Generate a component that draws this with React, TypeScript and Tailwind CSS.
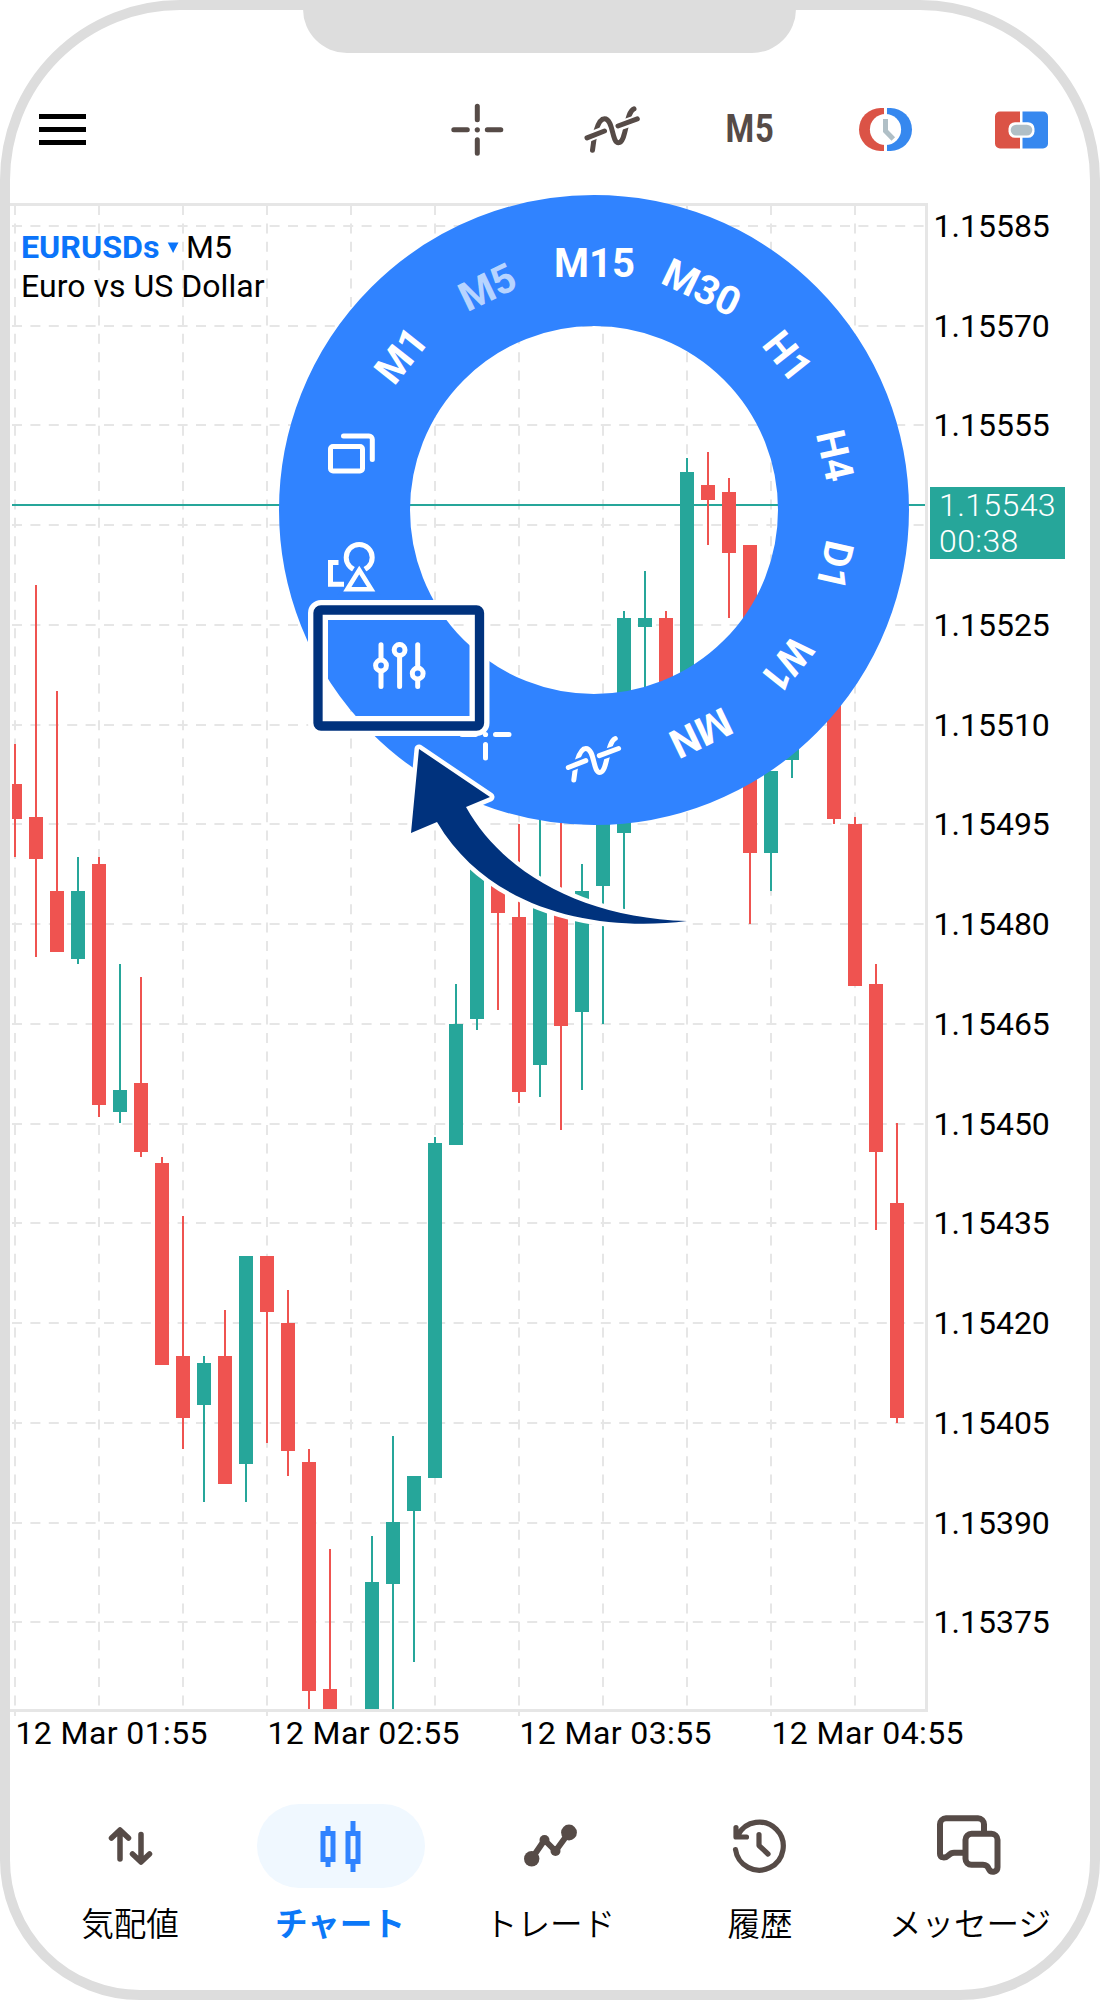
import React from 'react';

interface Candle {
  x: number;
  up: boolean;
  high: number;
  top: number;
  bottom: number;
  low: number;
}

const UP = '#26a69a';
const DOWN = '#ef5350';
const GRID = '#e6e6e6';
const RING = '#3083ff';
const INK = '#564b47';
const NAVY = '#00327d';

const c = (x: number, up: boolean, high: number, top: number, bottom: number, low: number): Candle => ({
  x, up, high, top, bottom, low
});

const candles: Candle[] = [
  c(15, false, 744, 784, 819, 857),
  c(36, false, 585, 817, 859, 957),
  c(57, false, 691, 891, 952, 952),
  c(78, true, 857, 891, 959, 964),
  c(99, false, 857, 864, 1105, 1117),
  c(120, true, 964, 1090, 1112, 1123),
  c(141, false, 977, 1083, 1152, 1157),
  c(162, false, 1157, 1163, 1365, 1365),
  c(183, false, 1216, 1356, 1418, 1449),
  c(204, true, 1356, 1363, 1405, 1502),
  c(225, false, 1310, 1356, 1484, 1484),
  c(246, true, 1256, 1256, 1464, 1502),
  c(267, false, 1256, 1256, 1312, 1443),
  c(288, false, 1290, 1323, 1451, 1476),
  c(309, false, 1449, 1462, 1691, 1709),
  c(330, false, 1549, 1689, 1709, 1709),
  c(372, true, 1536, 1582, 1709, 1709),
  c(393, true, 1436, 1522, 1584, 1709),
  c(414, true, 1476, 1476, 1511, 1662),
  c(435, true, 1137, 1143, 1478, 1478),
  c(456, true, 984, 1024, 1145, 1145),
  c(477, true, 862, 862, 1019, 1030),
  c(498, false, 875, 875, 913, 1010),
  c(519, false, 824, 917, 1092, 1103),
  c(540, true, 800, 895, 1065, 1097),
  c(561, false, 800, 891, 1026, 1130),
  c(582, true, 864, 891, 1012, 1090),
  c(603, true, 750, 750, 886, 1024),
  c(624, true, 611, 618, 833, 909),
  c(645, true, 571, 618, 627, 720),
  c(666, false, 611, 618, 720, 816),
  c(687, true, 458, 472, 700, 720),
  c(708, false, 452, 485, 500, 545),
  c(729, false, 478, 492, 553, 618),
  c(750, false, 545, 545, 853, 924),
  c(771, true, 771, 771, 853, 891),
  c(792, true, 730, 730, 760, 778),
  c(834, false, 660, 660, 819, 824),
  c(855, false, 817, 824, 986, 986),
  c(876, false, 964, 984, 1152, 1230),
  c(897, false, 1123, 1203, 1418, 1423)
];

const priceLevels = [
  { y: 226, label: '1.15585' },
  { y: 326, label: '1.15570' },
  { y: 425, label: '1.15555' },
  { y: 525, label: '' },
  { y: 625, label: '1.15525' },
  { y: 725, label: '1.15510' },
  { y: 824, label: '1.15495' },
  { y: 924, label: '1.15480' },
  { y: 1024, label: '1.15465' },
  { y: 1124, label: '1.15450' },
  { y: 1223, label: '1.15435' },
  { y: 1323, label: '1.15420' },
  { y: 1423, label: '1.15405' },
  { y: 1523, label: '1.15390' },
  { y: 1622, label: '1.15375' }
];

const timeLabels = [
  { x: 15, label: '12 Mar 01:55' },
  { x: 267, label: '12 Mar 02:55' },
  { x: 519, label: '12 Mar 03:55' },
  { x: 771, label: '12 Mar 04:55' }
];

const gridColumns = [15, 99, 183, 267, 351, 435, 519, 603, 687, 771, 855];

// 14 slots on the wheel, slot 0 is at the top
const wheelLabels = [
  { slot: 12, label: 'M1' },
  { slot: 13, label: 'M5', active: true },
  { slot: 0, label: 'M15' },
  { slot: 1, label: 'M30' },
  { slot: 2, label: 'H1' },
  { slot: 3, label: 'H4' },
  { slot: 4, label: 'D1' },
  { slot: 5, label: 'W1' },
  { slot: 6, label: 'MN' }
];

// Drawn around its own centre so it works in the toolbar and on the wheel
const IndicatorGlyph: React.FC<{ color: string; gap: string }> = ({ color, gap }) => (
  <g fill="none" strokeWidth={5} strokeLinecap="round" strokeLinejoin="round">
    <path
      d="M-20 20.500C-19 10 -15.500 -11 -8 -11C1 -11 -1 13 6 13C14 13 13 -18 21.500 -21"
      stroke={color}
    />
    <path d="M-23.500 7L-9.500 1.500M8 -4.500L24 -10" stroke={gap} strokeWidth={9.500} strokeLinecap="butt" />
    <path d="M-25.500 8L-8 1.200M5.500 -3.800L24.800 -11" stroke={color} />
  </g>
);

const CrosshairGlyph: React.FC<{ color: string }> = ({ color }) => (
  <g stroke={color} strokeWidth={5} strokeLinecap="round">
    <path d="M0 -23.500V-10M0 10V23.500M-23.500 0H-10M10 0H23.500" fill="none" />
    <circle r={2.6} fill={color} stroke="none" />
  </g>
);

const Header: React.FC = () => (
  <header className="flex h-[193px] shrink-0 items-center pt-[46px] pr-px pl-[29px]">
    <div className="flex w-[47px] flex-col gap-[7.5px]">
      <span className="h-[5.5px] bg-black" />
      <span className="h-[5.5px] bg-black" />
      <span className="h-[5.5px] bg-black" />
    </div>
    <div className="ml-auto grid w-[680px] grid-cols-5 place-items-center">
      <svg width="60" height="60" viewBox="-30.300 -29.800 60 60">
        <CrosshairGlyph color={INK} />
      </svg>
      <svg width="60" height="60" viewBox="-29.500 -29.800 60 60">
        <IndicatorGlyph color={INK} gap="#ffffff" />
      </svg>
      <span className="scale-x-[0.84] pl-[2px] text-[39px] leading-none font-bold tracking-[1px] text-[#564b47]">M5</span>
      <svg width="60" height="60" viewBox="-30.500 -29.500 60 60">
        <path d="M-1.500 -21.500H-5A21.500 21.500 0 0 0 -5 21.500H-1.500Z" fill="#db5346" />
        <path d="M1.500 -21.500H5A21.500 21.500 0 0 1 5 21.500H1.500Z" fill="#3688ef" />
        <circle r={15.6} fill="#fff" />
        <path d="M0 -10.500V1.500L7.800 9.500" fill="none" stroke="#b0bfc6" strokeWidth={5} />
      </svg>
      <svg width="60" height="60" viewBox="-30 -30 60 60">
        <path d="M-1 -18.500H-21A5 5 0 0 0 -26 -13.500V13.500A5 5 0 0 0 -21 18.500H-1Z" fill="#db5346" />
        <path d="M1.500 -18.500H22A5 5 0 0 1 27 -13.500V13.500A5 5 0 0 1 22 18.500H1.500Z" fill="#3688ef" />
        <rect x={-12.5} y={-7.8} width={26} height={15.6} rx={6.5} fill="#fff" />
        <rect x={-10.3} y={-5.3} width={21.6} height={10.8} rx={5.4} fill="#b0bfc6" />
      </svg>
    </div>
  </header>
);

const Chart: React.FC = () => (
  <svg className="block h-[1557px] w-[1080px]" viewBox="10 203 1080 1557">
    <defs>
      <clipPath id="plot">
        <rect x={12} y={203} width={914} height={1506} />
      </clipPath>
    </defs>

    <g stroke={GRID} strokeWidth={2} strokeDasharray="10 8.4">
      {gridColumns.map(x => (
        <line key={x} x1={x} x2={x} y1={205} y2={1709} />
      ))}
      {priceLevels.map(({ y }) => (
        <line key={y} x1={12} x2={932} y1={y} y2={y} />
      ))}
    </g>
    <path d="M10 204.500H926.500V1710.500H10" fill="none" stroke={GRID} strokeWidth={3} />
    {timeLabels.map(({ x }) => (
      <rect key={x} x={x - 1} y={1712} width={2} height={4} fill={GRID} />
    ))}

    <rect x={12} y={504} width={913} height={2} fill={UP} />
    <g clipPath="url(#plot)">
      {candles.map(({ x, up, high, top, bottom, low }) => (
        <g key={x} fill={up ? UP : DOWN}>
          <rect x={x - 1} y={high} width={2} height={low - high} />
          <rect x={x - 7} y={top} width={14} height={bottom - top} />
        </g>
      ))}
    </g>

    <g fontSize={32} fill="#000">
      <text x={21} y={258} fontWeight={700} fill="#0b74fa" textLength={138.5} lengthAdjust="spacingAndGlyphs">
        EURUSDs
      </text>
      <path d="M167.700 242.500H178.500L173.100 253Z" fill="#0b74fa" />
      <text x={186} y={258}>M5</text>
      <text x={21} y={297} textLength={243.5} lengthAdjust="spacing">Euro vs US Dollar</text>
      {priceLevels.map(({ y, label }) => (
        <text key={y} x={933.5} y={y + 11}>{label}</text>
      ))}
      {timeLabels.map(({ x, label }) => (
        <text key={x} x={x + 0.5} y={1744} textLength={192} lengthAdjust="spacing">{label}</text>
      ))}
    </g>

    <rect x={930} y={487} width={135} height={72} fill={UP} />
    <g fontSize={32} fontWeight={300} fill="#fff" letterSpacing={0.4}>
      <text x={939} y={516}>1.15543</text>
      <text x={939} y={552}>00:38</text>
    </g>
  </svg>
);

const Wheel: React.FC = () => (
  <svg
    className="absolute top-0 left-0 h-[1557px] w-[1080px] overflow-visible"
    viewBox="10 203 1080 1557"
  >
    <circle cx={594} cy={510} r={249.5} fill="none" stroke={RING} strokeWidth={131} />

    <g fontSize={40} fontWeight={700} textAnchor="middle" fill="#fff">
      {wheelLabels.map(({ slot, label, active }) => (
        <text
          key={label}
          x={594.5}
          y={276.8}
          transform={`rotate(${(slot * 360) / 14} 594 510)`}
          fillOpacity={active ? 0.67 : 1}
        >
          {label}
        </text>
      ))}
    </g>

    {/* windows */}
    <g fill="none" stroke="#fff" strokeWidth={5} strokeLinecap="round">
      <rect x={330.5} y={446.5} width={32} height={24.500} rx={2.5} />
      <path d="M343.500 436H369A3.300 3.300 0 0 1 372.300 439.300V459.500" />
    </g>

    {/* objects */}
    <g fill="none" stroke="#fff" strokeWidth={5}>
      <circle cx={359.2} cy={557.5} r={13} />
      <path d="M359.200 570.500L371 589.300H347.500Z" stroke={RING} strokeWidth={11} />
      <path d="M338.500 562.600H330.500V584.200H344" />
      <path d="M359.200 570L371.200 589.300H347.300Z" fill={RING} strokeWidth={4.6} />
    </g>

    {/* settings */}
    <g fill="none" stroke="#fff" strokeWidth={5} strokeLinecap="round">
      <path d="M381 644.800V686.500M399.600 644.800V686.500M417.700 644.800V686.500" />
      <circle cx={381} cy={665.500} r={5.400} fill={RING} />
      <circle cx={399.600} cy={650} r={5.400} fill={RING} />
      <circle cx={417.700} cy={673.500} r={5.400} fill={RING} />
    </g>

    <g transform="translate(485.5 734.5)">
      <CrosshairGlyph color="#fff" />
    </g>
    <g transform="translate(593.8 759.5)">
      <IndicatorGlyph color="#fff" gap={RING} />
    </g>

    {/* highlighted slot and pointer */}
    <rect x={318} y={610} width={161.5} height={116} rx={3} fill="none" stroke="#fff" strokeWidth={20} />
    <rect x={318} y={610} width={161.5} height={116} rx={3} fill="none" stroke={NAVY} strokeWidth={9.300} />
    <path
      d="M419 749L490 797L466 807C502 872 582 918 687 921C600 932 490 912 437 822L411 833Z"
      fill={NAVY}
      stroke="#fff"
      strokeWidth={9}
      strokeLinejoin="round"
      paintOrder="stroke"
    />
  </svg>
);

interface NavItem {
  label: string;
  active?: boolean;
  icon: React.ReactNode;
}

const navItems: NavItem[] = [
  {
    label: '気配値',
    icon: (
      <path d="M-10 13V-15M-18.500 -8L-10 -16L-1.500 -8M11 -11.500V15.500M2.500 8L11 16L19.500 8" strokeWidth={5.500} />
    )
  },
  {
    label: 'チャート',
    active: true,
    icon: (
      <g strokeWidth={5} strokeLinecap="butt" strokeLinejoin="miter">
        <path d="M-18 -12.500H-8V13.500H-18ZM-13 -20V-15M-13 16V21" />
        <path d="M7 -12.500H17V15.500H7ZM12 -25V-15M12 18V26" />
      </g>
    )
  },
  {
    label: 'トレード',
    icon: (
      <>
        <path d="M-18.300 12.700L-5.500 -6L5.500 5L19 -13.500" strokeWidth={6} />
        <g fill="currentColor" stroke="none">
          <circle cx={-18.3} cy={12.7} r={7.7} />
          <circle cx={-5.5} cy={-6} r={5} />
          <circle cx={5.5} cy={5} r={5} />
          <circle cx={19} cy={-13.5} r={7.900} />
        </g>
      </>
    )
  },
  {
    label: '履歴',
    icon: (
      <path
        d="M-24.500 3.500A24 24 0 1 0 -22 -11M-24 -18.500V-9H-13.500M-1 -11.500V-0.500L8 8"
        strokeWidth={5.200}
      />
    )
  },
  {
    label: 'メッセージ',
    icon: (
      <g strokeWidth={6} transform="translate(-1 -0.7)">
        <path d="M15 -13V-21A6 6 0 0 0 9 -27H-23A6 6 0 0 0 -29 -21V8.500C-29 13 -23.500 13 -20.500 10Q-18 7.500 -15 7.500H-4" />
        <path d="M2.500 -11.500H22.500A6 6 0 0 1 28.500 -5.500V22C28.500 27.500 21.500 27.500 20 24Q18.500 19.500 14 19.500H2.500A6 6 0 0 1 -3.500 13.500V-5.500A6 6 0 0 1 2.500 -11.500Z" />
      </g>
    )
  }
];

const BottomNav: React.FC = () => (
  <nav className="grid grid-cols-5 px-[15px] pt-[44px]">
    {navItems.map(({ label, active, icon }) => (
      <div key={label} className="flex flex-col items-center">
        <div
          className={`flex h-[84px] w-[168px] items-center justify-center rounded-full ${
            active ? 'translate-x-px bg-[#f0f8ff] text-[#3083ff]' : 'text-[#564b47]'
          }`}
        >
          <svg
            width="70"
            height="70"
            viewBox="-35 -35 70 70"
            fill="none"
            stroke="currentColor"
            strokeLinecap="round"
            strokeLinejoin="round"
          >
            {icon}
          </svg>
        </div>
        <span
          className={`mt-[21px] text-[32.6px] leading-[32px] whitespace-nowrap last:tracking-normal ${
            active ? 'font-bold text-[#0b78f8]' : 'font-[350] text-black'
          }`}
        >
          {label}
        </span>
      </div>
    ))}
  </nav>
);

export default function App() {
  return (
    <div className="h-[2000px] w-[1100px] overflow-hidden bg-white font-['Roboto','Noto_Sans_CJK_JP',sans-serif]">
      <div className="relative flex h-[2000px] w-[1100px] flex-col rounded-t-[180px] rounded-b-[140px] border-[10px] border-[#ddd] bg-white">
        <div className="absolute -top-px left-[293px] h-[44px] w-[493px] rounded-b-[46px] bg-[#ddd]" />
        <Header />
        <div className="relative">
          <Chart />
          <Wheel />
        </div>
        <BottomNav />
      </div>
    </div>
  );
}
